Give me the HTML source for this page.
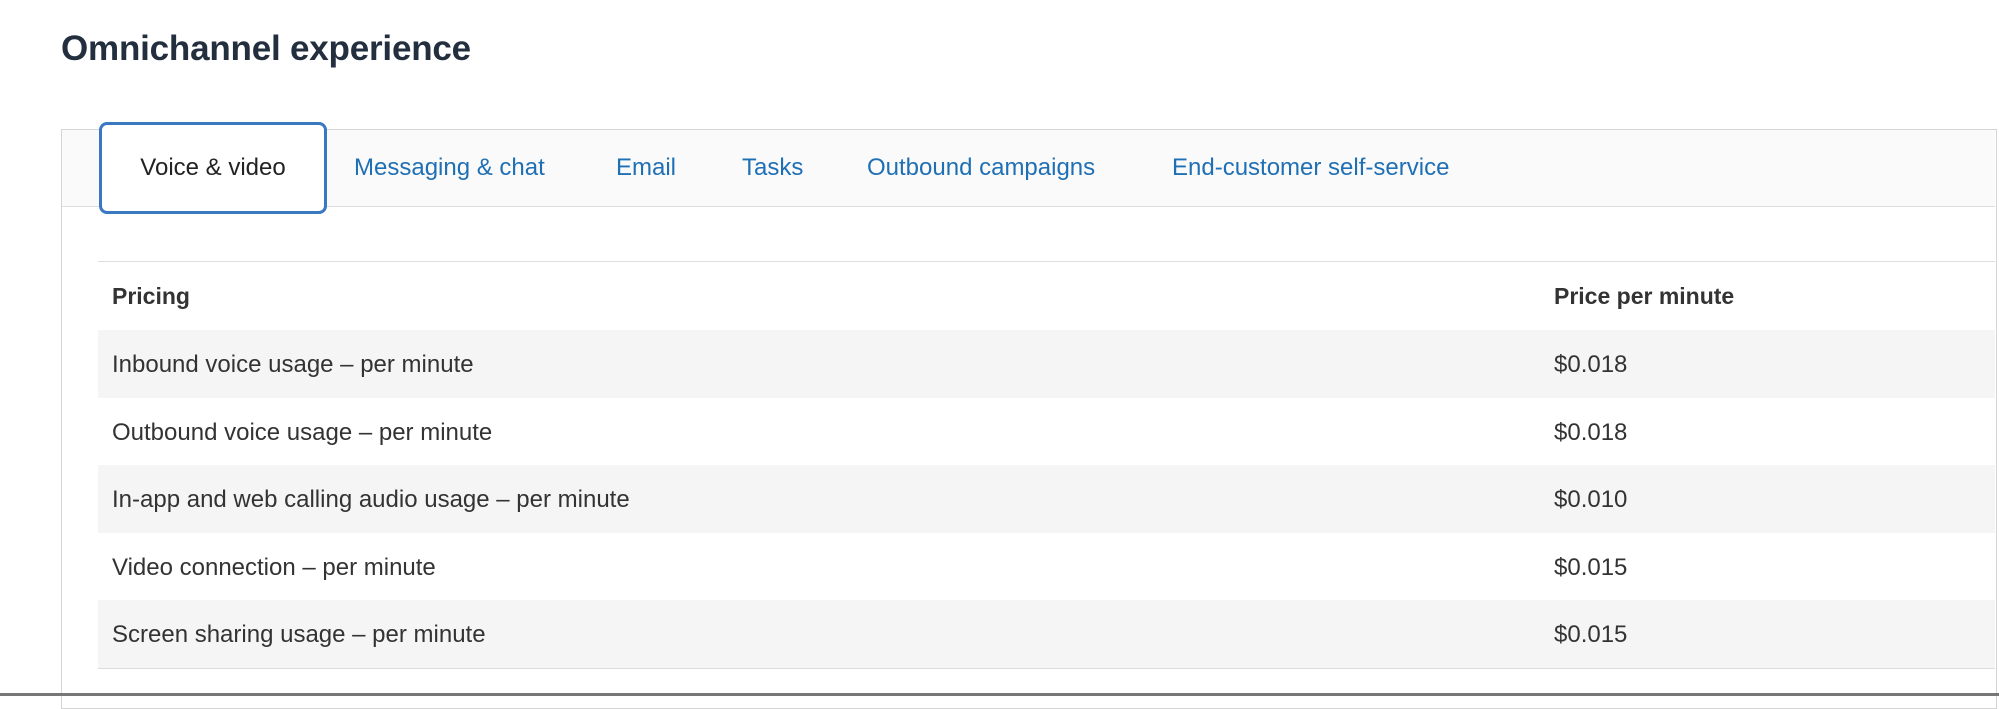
<!DOCTYPE html>
<html><head><style>
*{margin:0;padding:0;box-sizing:border-box}
body{width:1999px;height:696px;background:#fff;font-family:"Liberation Sans",sans-serif;position:relative;overflow:hidden;color:#333}
h1{position:absolute;left:61px;top:29px;font-size:35px;font-weight:bold;color:#232f3e;letter-spacing:-0.2px}
.box{position:absolute;left:61px;top:129px;width:1936px;height:580px;border:1.5px solid #d5d5d5}
.bar{position:absolute;left:62px;top:130px;width:1933px;height:77px;background:#fafafa;border-bottom:1.5px solid #ddd}
.tab{position:absolute;top:154px;font-size:24px;color:#1f6fb5;white-space:nowrap}
.act{position:absolute;left:99px;top:122px;width:228px;height:92px;border:3px solid #3a78c0;border-radius:8px;background:#fff}
.act span{position:absolute;left:0;right:0;top:29px;text-align:center;font-size:24px;color:#222}
.tbl{position:absolute;left:98px;top:261px;width:1897px;border-top:1.5px solid #ddd}
.row{height:67.5px;position:relative;font-size:24px}
.row div{position:absolute;top:21px}
.row .a{left:14px}.row .b{left:1456px}
.g{background:#f5f5f5}
.hd{font-weight:bold;height:68px;font-size:23px}
.hd div{top:21px}
.end{border-top:1.5px solid #ddd}
.bot{position:absolute;left:0;top:693px;width:1999px;height:3px;background:#777}
</style></head><body>
<h1>Omnichannel experience</h1>
<div class="box"></div>
<div class="bar"></div>
<div class="act"><span>Voice &amp; video</span></div>
<div class="tab" style="left:354px">Messaging &amp; chat</div>
<div class="tab" style="left:616px">Email</div>
<div class="tab" style="left:742px">Tasks</div>
<div class="tab" style="left:867px">Outbound campaigns</div>
<div class="tab" style="left:1172px">End-customer self-service</div>
<div class="tbl">
<div class="row hd"><div class="a">Pricing</div><div class="b">Price per minute</div></div>
<div class="row g"><div class="a">Inbound voice usage – per minute</div><div class="b">$0.018</div></div>
<div class="row"><div class="a">Outbound voice usage – per minute</div><div class="b">$0.018</div></div>
<div class="row g"><div class="a">In-app and web calling audio usage – per minute</div><div class="b">$0.010</div></div>
<div class="row"><div class="a">Video connection – per minute</div><div class="b">$0.015</div></div>
<div class="row g"><div class="a">Screen sharing usage – per minute</div><div class="b">$0.015</div></div>
<div class="end"></div>
</div>
<div class="bot"></div>
</body></html>
